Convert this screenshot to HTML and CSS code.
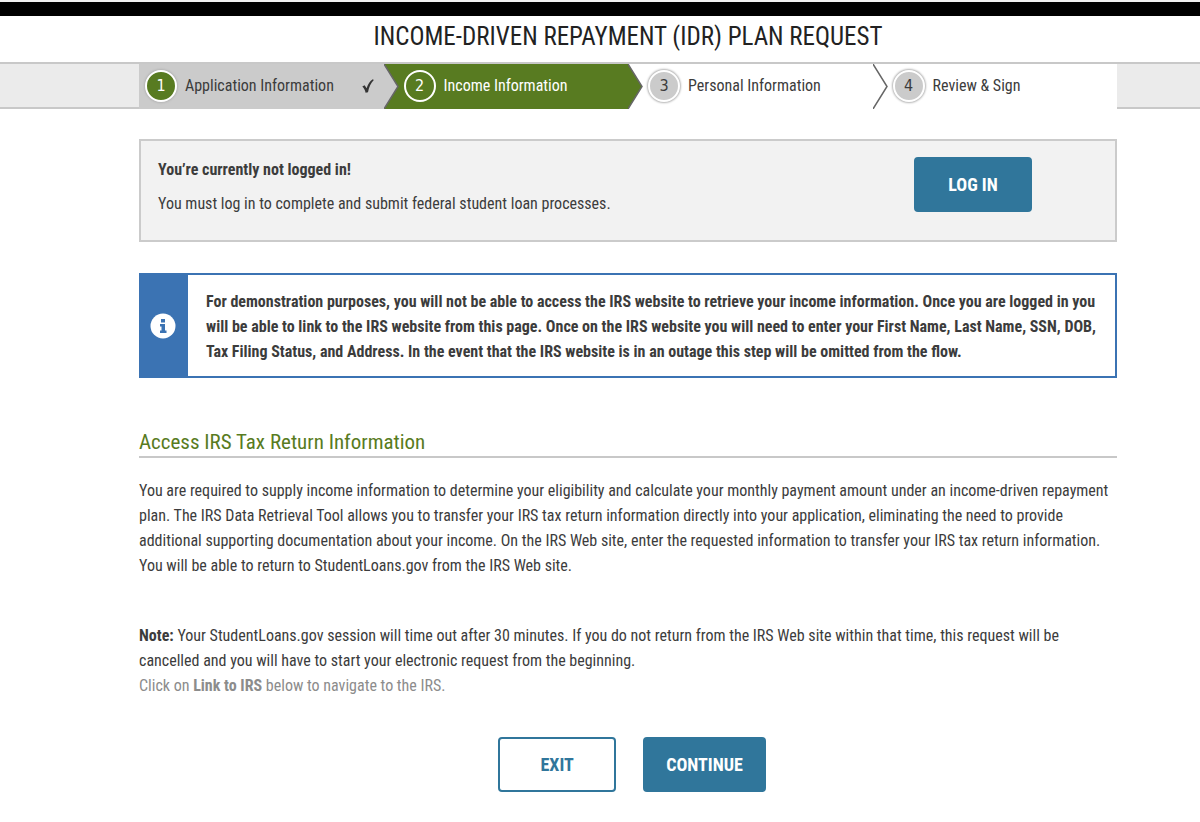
FILE: index.html
```html
<!DOCTYPE html>
<html lang="en">
<head>
  <meta charset="UTF-8">
  <meta name="viewport" content="width=device-width, initial-scale=1.0">
  <title>Income-Driven Repayment (IDR) Plan Request</title>
  <link rel="stylesheet" href="styles.css">
</head>
<body>
  <div class="top-bar"></div>

  <header class="page-header">
    <h1>INCOME-DRIVEN REPAYMENT (IDR) PLAN REQUEST</h1>
  </header>

  <nav class="progress">
    <ol class="steps">
      <li class="step done">
        <span class="step-number">1</span>
        <span class="step-label">Application Information</span>
        <svg class="check" viewBox="0 0 12 14" width="12" height="14"><path d="M0.300 7.600 2.600 6.200 4.600 9.200C6 5 8 1.900 10.800 0.300L11.800 1C8.800 4 7 8 6 13.200L3.600 13.700C3 11 2 9.200 0.300 7.600Z"/></svg>
        <svg class="arrow" viewBox="0 0 15 45" width="15" height="45"><path d="M0 0 14 22.5 0 45"/></svg>
      </li>
      <li class="step current">
        <span class="step-number">2</span>
        <span class="step-label">Income Information</span>
        <svg class="arrow" viewBox="0 0 15 45" width="15" height="45"><path d="M0 0 14 22.5 0 45"/></svg>
      </li>
      <li class="step">
        <span class="step-number">3</span>
        <span class="step-label">Personal Information</span>
        <svg class="arrow" viewBox="0 0 15 45" width="15" height="45"><path d="M0 0 14 22.5 0 45"/></svg>
      </li>
      <li class="step">
        <span class="step-number">4</span>
        <span class="step-label">Review &amp; Sign</span>
      </li>
    </ol>
  </nav>

  <main class="container">
    <section class="login-box">
      <div class="login-text">
        <p><strong>You’re currently not logged in!</strong></p>
        <p>You must log in to complete and submit federal student loan processes.</p>
      </div>
      <button type="button" class="btn btn-primary">LOG IN</button>
    </section>

    <section class="info-box">
      <div class="info-icon">
        <svg viewBox="0 0 26 26" width="26" height="26">
          <circle cx="13" cy="13" r="12.5" fill="#fff"/>
          <path d="M11 6h4v3.500h-4zM10 11h5v6.500h1.500v2.500h-6.500v-2.500h1.500v-4h-1.500z" fill="#3b73b3"/>
        </svg>
      </div>
      <p>For demonstration purposes, you will not be able to access the IRS website to retrieve your income information. Once you are logged in you
        will be able to link to the IRS website from this page. Once on the IRS website you will need to enter your First Name, Last Name, SSN, DOB,
        Tax Filing Status, and Address. In the event that the IRS website is in an outage this step will be omitted from the flow.</p>
    </section>

    <section class="content">
      <h2>Access IRS Tax Return Information</h2>
      <p>You are required to supply income information to determine your eligibility and calculate your monthly payment amount under an income-driven repayment
        plan. The IRS Data Retrieval Tool allows you to transfer your IRS tax return information directly into your application, eliminating the need to provide<br>
        additional supporting documentation about your income. On the IRS Web site, enter the requested information to transfer your IRS tax return information.<br>
        You will be able to return to StudentLoans.gov from the IRS Web site.</p>
      <p class="note"><strong>Note:</strong> Your StudentLoans.gov session will time out after 30 minutes. If you do not return from the IRS Web site within that time, this request will be<br>
        cancelled and you will have to start your electronic request from the beginning.</p>
      <p class="hint">Click on <strong>Link to IRS</strong> below to navigate to the IRS.</p>
    </section>

    <div class="actions">
      <button type="button" class="btn btn-outline">EXIT</button>
      <button type="button" class="btn btn-primary">CONTINUE</button>
    </div>
  </main>
</body>
</html>
```

FILE: styles.css
```css
* {
  box-sizing: border-box;
}

body {
  margin: 0;
  background-color: #fff;
  color: #3c3c3c;
  font-family: "Roboto Condensed", "Liberation Sans Narrow", "Liberation Sans", sans-serif;
  font-size: 16px;
  line-height: 25px;
}

h1, h2, p, ol {
  margin: 0;
  padding: 0;
  font-weight: normal;
}

.top-bar {
  height: 16px;
  border-top: 2px solid #f0f0f0;
  background-color: #000;
}

.page-header {
  padding: 5px 83px 9px 139px;
  text-align: center;
}

.page-header h1 {
  color: #222;
  font-size: 25px;
  line-height: 32px;
}

/* Progress steps */
.progress {
  padding: 0 83px 0 139px;
  border-top: 2px solid #c8c8c8;
  background: linear-gradient(#c8c8c8, #c8c8c8) bottom / 100% 2px no-repeat #ebebeb;
}

.steps {
  display: grid;
  grid-template-columns: repeat(4, 1fr);
  list-style: none;
  background-color: #fff;
}

.step {
  position: relative;
  display: flex;
  align-items: center;
  gap: 8px;
  height: 45px;
  padding: 0 10px 2px 20px;
}

.step-number {
  width: 32px;
  height: 32px;
  border: 2px solid #fff;
  border-radius: 50%;
  background-color: #cbcbcb;
  box-shadow: 0 0 2px 1px #b5b5b5;
  font-family: "DejaVu Sans Condensed", "DejaVu Sans", sans-serif;
  line-height: 28px;
  text-align: center;
}

.step.done {
  padding-left: 6px;
  background-color: #cbcbcb;
}

.done .step-number {
  background-color: #587b21;
  color: #fff;
}

.step.current {
  background-color: #587b21;
  color: #fff;
}

.current .step-number {
  background-color: #587b21;
  box-shadow: none;
}

.check {
  margin-left: auto;
  fill: #333;
}

.arrow {
  position: absolute;
  top: 0;
  left: 100%;
  z-index: 1;
  fill: #fff;
  stroke: #666;
  stroke-width: 1.5;
}

.done .arrow {
  fill: #cbcbcb;
}

.current .arrow {
  fill: #587b21;
}

.container {
  padding: 30px 83px 30px 139px;
}

.login-box {
  display: flex;
  justify-content: space-between;
  align-items: flex-start;
  padding: 16px 83px 24px 17px;
  border: 2px solid #cbcbcb;
  background-color: #f2f2f2;
}

.login-text p + p {
  margin-top: 9px;
}

.btn {
  min-width: 118px;
  height: 55px;
  padding: 0 21px;
  border: 2px solid #30769b;
  border-radius: 4px;
  font-family: inherit;
  font-size: 18px;
  font-weight: bold;
  cursor: pointer;
}

.btn-primary {
  background-color: #30769b;
  color: #fff;
}

.btn-outline {
  background-color: #fff;
  color: #30769b;
}

/* Info message */
.info-box {
  display: flex;
  margin-top: 31px;
  border: 2px solid #3b73b3;
}

.info-icon {
  display: flex;
  flex: 0 0 47px;
  align-items: center;
  justify-content: center;
  padding-right: 4px;
  background-color: #3b73b3;
}

.info-box p {
  padding: 14px 16px 12px 18px;
  font-weight: bold;
}

.content h2 {
  margin: 50px 0 20px;
  border-bottom: 2px solid #c8c8c8;
  color: #587b21;
  font-size: 21px;
  line-height: 28px;
}

.note {
  margin-top: 45px;
}

.hint {
  color: #8c8c8c;
}

.actions {
  display: flex;
  justify-content: center;
  gap: 27px;
  margin-top: 39px;
  padding-left: 8px;
}
```
